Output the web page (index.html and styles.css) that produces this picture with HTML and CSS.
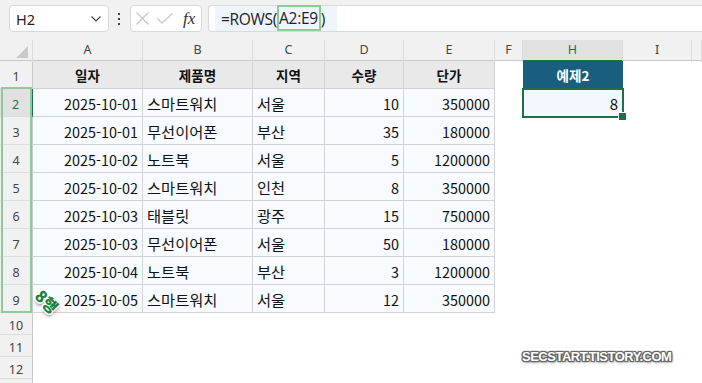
FILE: index.html
```html
<!DOCTYPE html>
<html lang="ko">
<head>
<meta charset="utf-8">
<title>ROWS</title>
<link rel="stylesheet" href="styles.css">
</head>
<body>
<div class="toolbar">
  <div class="namebox">
    <span class="nb-ref">H2</span>
    <svg class="chev" width="10" height="6" viewBox="0 0 10 6"><polyline points="0.5,0.5 5,5 9.5,0.5" fill="none" stroke="#444" stroke-width="1.2"/></svg>
  </div>
  <div class="dots"><i></i><i></i><i></i></div>
  <div class="fbtns">
    <svg class="ico-x" width="13" height="13" viewBox="0 0 13 13"><path d="M0.5 0.5 L12.5 12.5 M12.5 0.5 L0.5 12.5" stroke="#c4c4c4" stroke-width="1.2" fill="none"/></svg>
    <svg class="ico-ok" width="16" height="11" viewBox="0 0 16 11"><polyline points="0.5,5.5 5,10 15.5,0.5" fill="none" stroke="#c4c4c4" stroke-width="1.2"/></svg>
    <span class="fx">fx</span>
  </div>
  <div class="formula">
    <div class="fhl">=ROWS(<span class="refbox">A2:E9</span>)</div>
  </div>
</div>

<div class="sheet">
  <div class="row colhead">
    <div class="corner"><span class="tri"></span></div>
    <div>A</div><div>B</div><div>C</div><div>D</div><div>E</div><div>F</div><div class="sel">H</div><div>I</div><div></div>
  </div>

  <div class="row r">
    <div class="rh">1</div>
    <div class="c th">일자</div><div class="c th">제품명</div><div class="c th">지역</div><div class="c th">수량</div><div class="c th">단가</div>
    <div></div><div class="h1">예제2</div><div></div><div></div>
  </div>
  <div class="row r">
    <div class="rh sel">2</div>
    <div class="c num">2025-10-01</div><div class="c">스마트워치</div><div class="c">서울</div><div class="c num">10</div><div class="c num">350000</div>
    <div></div><div class="h2 num">8</div><div></div><div></div>
  </div>
  <div class="row r">
    <div class="rh">3</div>
    <div class="c num">2025-10-01</div><div class="c">무선이어폰</div><div class="c">부산</div><div class="c num">35</div><div class="c num">180000</div>
    <div></div><div></div><div></div><div></div>
  </div>
  <div class="row r">
    <div class="rh">4</div>
    <div class="c num">2025-10-02</div><div class="c">노트북</div><div class="c">서울</div><div class="c num">5</div><div class="c num">1200000</div>
    <div></div><div></div><div></div><div></div>
  </div>
  <div class="row r">
    <div class="rh">5</div>
    <div class="c num">2025-10-02</div><div class="c">스마트워치</div><div class="c">인천</div><div class="c num">8</div><div class="c num">350000</div>
    <div></div><div></div><div></div><div></div>
  </div>
  <div class="row r">
    <div class="rh">6</div>
    <div class="c num">2025-10-03</div><div class="c">태블릿</div><div class="c">광주</div><div class="c num">15</div><div class="c num">750000</div>
    <div></div><div></div><div></div><div></div>
  </div>
  <div class="row r">
    <div class="rh">7</div>
    <div class="c num">2025-10-03</div><div class="c">무선이어폰</div><div class="c">서울</div><div class="c num">50</div><div class="c num">180000</div>
    <div></div><div></div><div></div><div></div>
  </div>
  <div class="row r">
    <div class="rh">8</div>
    <div class="c num">2025-10-04</div><div class="c">노트북</div><div class="c">부산</div><div class="c num">3</div><div class="c num">1200000</div>
    <div></div><div></div><div></div><div></div>
  </div>
  <div class="row r">
    <div class="rh">9</div>
    <div class="c num">2025-10-05</div><div class="c">스마트워치</div><div class="c">서울</div><div class="c num">12</div><div class="c num">350000</div>
    <div></div><div></div><div></div><div></div>
  </div>
  <div class="row s"><div class="rh">10</div></div>
  <div class="row s"><div class="rh">11</div></div>
  <div class="row s"><div class="rh">12</div></div>
  <div class="row s"><div class="rh"></div></div>

  <div class="anno"></div>
  <div class="badge">8행</div>
  <div class="watermark">SECSTART.TISTORY.COM</div>
</div>
</body>
</html>
```

FILE: styles.css
```css
* { box-sizing: border-box; }
html, body { margin: 0; padding: 0; }
body {
  width: 702px;
  height: 383px;
  overflow: hidden;
  background: #ffffff;
  font-family: "Noto Sans CJK KR", "Noto Sans", sans-serif;
  color: #111;
}

/* ---------- toolbar ---------- */
.toolbar {
  height: 40px;
  background: #f1f1f1;
  display: flex;
  align-items: flex-start;
  padding-top: 5px;
}
.namebox {
  margin-left: 9px;
  width: 100px;
  height: 27px;
  background: #fff;
  border: 1px solid #d9d9d9;
  border-radius: 4px;
  display: flex;
  align-items: center;
  justify-content: space-between;
  padding: 0 7px 0 6px;
}
.nb-ref {
  font-family: "Noto Sans", sans-serif;
  font-size: 14.5px;
  color: #222;
}
.chev { margin-top: 1px; }
.dots {
  margin-left: 9px;
  width: 3px;
  height: 27px;
  display: flex;
  flex-direction: column;
  justify-content: center;
  gap: 3px;
}
.dots i {
  display: block;
  width: 2px;
  height: 2px;
  background: #444;
}
.fbtns {
  margin-left: 9px;
  width: 72px;
  height: 27px;
  background: #fff;
  border: 1px solid #d9d9d9;
  border-radius: 4px;
  display: flex;
  align-items: center;
  padding-left: 5px;
}
.ico-ok { margin-left: 8px; }
.fx {
  margin-left: 10px;
  font-family: "Liberation Serif", serif;
  font-style: italic;
  font-size: 17px;
  color: #333;
  line-height: 1;
}
.formula {
  margin-left: 6px;
  flex: 1;
  height: 27px;
  background: #fff;
  border: 1px solid #d9d9d9;
  border-right: none;
  border-radius: 4px 0 0 4px;
  padding-left: 6px;
  display: flex;
}
.fhl {
  background: #eef5fd;
  height: 25px;
  padding: 0 0 0 6px;
  width: 122px;
  display: flex;
  align-items: center;
  font-family: "Open Sans", sans-serif;
  font-size: 15.5px;
  color: #222;
  letter-spacing: -0.3px;
}
.refbox {
  height: 26px;
  margin-top: -1px;
  border: 2px solid #8ec998;
  display: flex;
  align-items: center;
  padding: 0 1px 0 0;
}

/* ---------- sheet ---------- */
.sheet { position: relative; }
.row {
  display: grid;
  grid-template-columns: 33px 110px 110px 72px 79px 91px 28px 100px 69px 1fr;
}
.colhead {
  height: 21px;
  background: #f1f1f1;
  border-bottom: 1px solid #c8c8c8;
}
.colhead > div {
  border-right: 1px solid #dcdcdc;
  text-align: center;
  font-family: "Noto Sans", sans-serif;
  font-size: 12.5px;
  line-height: 20px;
  color: #444;
}
.colhead > div.sel {
  background: #e1e1e1;
  color: #1e7145;
  border-bottom: 2px solid #1e7145;
}
.corner { position: relative; }
.tri {
  position: absolute;
  right: 4px;
  bottom: 4px;
  width: 0;
  height: 0;
  border-left: 12px solid transparent;
  border-bottom: 12px solid #c9c9c9;
}
.r { height: 28px; }
.s { height: 22px; }
.rh {
  background: #f1f1f1;
  border-right: 1px solid #c8c8c8;
  border-bottom: 1px solid #dcdcdc;
  text-align: center;
  font-family: "Noto Sans", sans-serif;
  font-size: 12.5px;
  color: #444;
  display: flex;
  align-items: center;
  justify-content: center;
  padding-top: 3px;
}
.rh.sel {
  background: #e1e1e1;
  color: #1e7145;
  border-right: 2px solid #1e7145;
}
.c {
  background: #f7fbff;
  border-right: 1px solid #d3d3d3;
  border-bottom: 1px solid #d3d3d3;
  display: flex;
  align-items: center;
  padding: 1px 4px 0 4px;
  font-size: 15.3px;
  color: #111;
  white-space: nowrap;
}
.c.num { font-size: 14.4px; }
.c.th {
  background: #e9e9e9;
  justify-content: center;
  font-weight: bold;
  font-size: 13.5px;
}
.num { justify-content: flex-end; }
.h1 {
  background: #195d7f;
  color: #fff;
  font-weight: bold;
  font-size: 13.5px;
  display: flex;
  align-items: center;
  justify-content: center;
}
.h2 {
  position: relative;
  background: #f3f8fe;
  outline: 2px solid #1e7145;
  outline-offset: -1px;
  display: flex;
  align-items: center;
  padding: 1px 5px 0 4px;
  font-size: 15px;
}
.h2::after {
  content: "";
  position: absolute;
  right: -4px;
  bottom: -4px;
  width: 7px;
  height: 7px;
  background: #1e7145;
  border: 1px solid #fff;
}

/* ---------- overlays ---------- */
.anno {
  position: absolute;
  left: 1px;
  top: 47px;
  width: 31px;
  height: 226px;
  border: 2px solid #8ec998;
}
.badge {
  position: absolute;
  left: 35px;
  top: 253px;
  transform: rotate(45deg);
  transform-origin: center;
  font-size: 16px;
  font-weight: 900;
  color: #22803a;
  text-shadow:
    1.5px 0 0 #fff, -1.5px 0 0 #fff, 0 1.5px 0 #fff, 0 -1.5px 0 #fff,
    1px 1px 0 #fff, -1px -1px 0 #fff, 1px -1px 0 #fff, -1px 1px 0 #fff,
    2px 2px 3px rgba(0,0,0,0.5);
  letter-spacing: 0;
  line-height: 1;
}
.watermark {
  position: absolute;
  left: 522px;
  top: 309px;
  font-family: "Liberation Sans", sans-serif;
  font-weight: bold;
  font-size: 13px;
  letter-spacing: -0.5px;
  color: #fff;
  text-shadow:
    1px 0 0 #666, -1px 0 0 #666, 0 1px 0 #666, 0 -1px 0 #666,
    1px 1px 1px #555, -1px -1px 1px #555, 1px -1px 1px #555, -1px 1px 1px #555,
    1px 2px 3px rgba(0,0,0,0.4);
}
```
